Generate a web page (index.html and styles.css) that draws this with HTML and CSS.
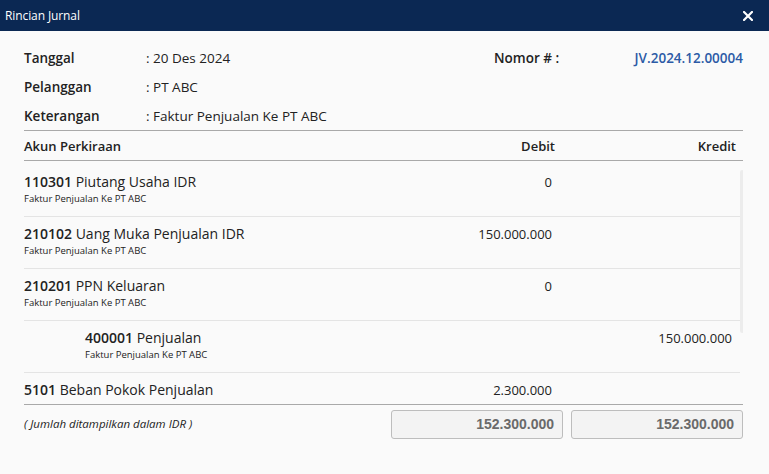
FILE: index.html
```html
<!DOCTYPE html>
<html lang="id">
<head>
<meta charset="utf-8">
<title>Rincian Jurnal</title>
<link rel="stylesheet" href="styles.css">
</head>
<body>
<div class="dialog">
  <div class="titlebar">
    <span class="title">Rincian Jurnal</span>
    <svg class="close" width="10" height="10" viewBox="0 0 10 10"><path d="M1 1L9 9M9 1L1 9" stroke="#fff" stroke-width="2.2" stroke-linecap="square"/></svg>
  </div>
  <div class="content">
    <div class="info">
      <div class="lbl">Tanggal</div><div class="val">: 20 Des 2024</div>
      <div class="lbl nomor-lbl">Nomor # :</div><div class="nomor-val">JV.2024.12.00004</div>
      <div class="lbl">Pelanggan</div><div class="val span3">: PT ABC</div>
      <div class="lbl">Keterangan</div><div class="val span3">: Faktur Penjualan Ke PT ABC</div>
    </div>
    <div class="thead">
      <div>Akun Perkiraan</div>
      <div class="num">Debit</div>
      <div class="num kredit">Kredit</div>
    </div>
    <div class="tbody-wrap">
      <div class="tbody">
        <div class="row">
          <div class="acct"><div class="main"><b>110301</b> Piutang Usaha IDR</div><div class="sub">Faktur Penjualan Ke PT ABC</div></div>
          <div class="debit">0</div>
          <div class="kredit"></div>
        </div>
        <div class="row">
          <div class="acct"><div class="main"><b>210102</b> Uang Muka Penjualan IDR</div><div class="sub">Faktur Penjualan Ke PT ABC</div></div>
          <div class="debit">150.000.000</div>
          <div class="kredit"></div>
        </div>
        <div class="row">
          <div class="acct"><div class="main"><b>210201</b> PPN Keluaran</div><div class="sub">Faktur Penjualan Ke PT ABC</div></div>
          <div class="debit">0</div>
          <div class="kredit"></div>
        </div>
        <div class="row">
          <div class="acct indent"><div class="main"><b>400001</b> Penjualan</div><div class="sub">Faktur Penjualan Ke PT ABC</div></div>
          <div class="debit"></div>
          <div class="kredit">150.000.000</div>
        </div>
        <div class="row">
          <div class="acct"><div class="main"><b>5101</b> Beban Pokok Penjualan</div></div>
          <div class="debit">2.300.000</div>
          <div class="kredit"></div>
        </div>
      </div>
      <div class="thumb"></div>
    </div>
    <div class="tfoot">
      <div class="note">( Jumlah ditampilkan dalam IDR )</div>
      <div class="total">152.300.000</div>
      <div class="total">152.300.000</div>
    </div>
  </div>
</div>
</body>
</html>
```
FILE: styles.css
```css
* { box-sizing: border-box; }
html, body { margin: 0; padding: 0; }
body {
  background: #fafafa;
  font-family: "Open Sans", "Noto Sans", sans-serif;
  color: #222;
  width: 769px;
  height: 474px;
  overflow: hidden;
}
.dialog { width: 769px; height: 474px; background: #fafafa; }
.titlebar {
  height: 31px;
  background: #0b2853;
  color: #fff;
  display: flex;
  align-items: center;
  justify-content: space-between;
  padding: 0 16px 0 5px;
}
.title { font-size: 12px; letter-spacing: -0.1px; }
.close { display: block; }
.content { padding: 12px 26px 0 24px; }
.info {
  display: grid;
  grid-template-columns: 122px 348px 1fr auto;
  grid-auto-rows: 29px;
  align-items: center;
  font-size: 13.5px;
  border-bottom: 1px solid #a9a9a9;
}
.lbl { font-weight: 600; }
.span3 { grid-column: 2 / 5; }
.nomor-val { color: #2c5aa6; font-weight: 600; justify-self: end; }
.thead {
  display: grid;
  grid-template-columns: 1fr 188px 188px;
  height: 30px;
  align-items: center;
  font-size: 13px;
  font-weight: 600;
  border-bottom: 1px solid #a9a9a9;
}
.thead .num { text-align: right; }
.thead .kredit { padding-right: 7px; }
.tbody-wrap {
  position: relative;
  height: 243px;
  overflow: hidden;
}
.tbody { padding-top: 4px; width: 716px; }
.row {
  display: grid;
  grid-template-columns: 1fr 185px 185px;
  padding: 7px 0 10px;
  border-bottom: 1px solid #e4e4e4;
  font-size: 13px;
}
.main { line-height: 20px; height: 20px; font-size: 14px; }
.main b { font-weight: 600; }
.sub { font-size: 9.5px; line-height: 14px; height: 14px; }
.indent { padding-left: 61px; }
.debit { text-align: right; padding-right: 3px; line-height: 20px; }
.row .kredit { text-align: right; padding-right: 8px; line-height: 20px; }
.thumb {
  position: absolute;
  left: 716px;
  top: 9px;
  width: 4px;
  height: 163px;
  background: #ececec;
  border-radius: 2px;
}
.tfoot {
  border-top: 1px solid #a9a9a9;
  display: flex;
  align-items: center;
  gap: 8px;
  padding-top: 5px;
}
.note { flex: 1; font-size: 11.5px; font-style: italic; align-self: flex-start; padding-top: 6px; }
.total {
  width: 172px;
  height: 29px;
  border: 1px solid #bdbdbd;
  border-radius: 3px;
  background: #f3f3f3;
  font-family: "Liberation Sans", Arial, sans-serif;
  font-weight: 700;
  font-size: 14px;
  color: #6a6a6a;
  text-align: right;
  padding-right: 8px;
  line-height: 27px;
}
```
